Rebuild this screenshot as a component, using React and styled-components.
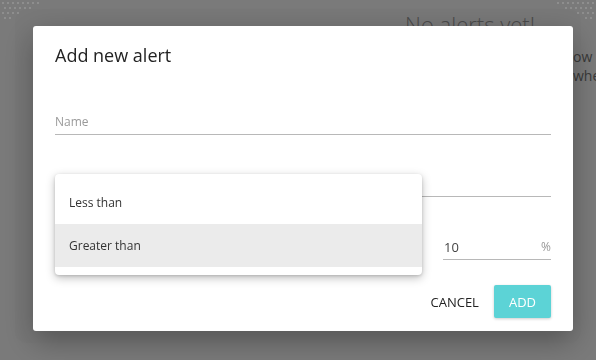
import React from "react";
import styled, { createGlobalStyle } from "styled-components";

const GlobalStyle = createGlobalStyle`
  html, body {
    margin: 0;
    padding: 0;
    width: 100%;
    height: 100%;
    overflow: hidden;
  }
  body {
    font-family: "Open Sans", "Liberation Sans", sans-serif;
    background: #f4f4f4;
    color: #333;
  }
`;

// Page behind the dialog
const Page = styled.div`
  width: 596px;
  height: 360px;
  box-sizing: border-box;
  padding: 13px 15px;
`;

const Card = styled.div`
  height: 100%;
  border-radius: 12px;
  background: #f1f1f1;
  box-sizing: border-box;
  padding-left: 330px;
`;

const EmptyState = styled.div`
  width: 250px;
  margin-top: -4px;
  white-space: nowrap;
`;

const EmptyTitle = styled.h2`
  margin: 0;
  font-size: 22px;
  font-weight: 300;
  line-height: 30px;
  text-align: center;
  color: #959595;
`;

const EmptyLine = styled.div`
  display: grid;
  grid-template-columns: 228px auto;
  font-size: 14px;
  line-height: 19px;
  color: #747474;
  margin-top: ${(p) => p.$gap || 0}px;
  & > span:first-child {
    text-align: right;
  }
`;

const Dots = styled.svg`
  position: absolute;
  top: 0;
  ${(p) => (p.$right ? "right: 0;" : "left: 0;")}
  opacity: 0.35;
`;

// Modal
const Backdrop = styled.div`
  position: fixed;
  inset: 0;
  background: rgba(0, 0, 0, 0.5);
`;

const Dialog = styled.div`
  position: fixed;
  left: 33px;
  top: 26px;
  width: 540px;
  box-sizing: border-box;
  padding: 15px 22px 13px;
  background: #fff;
  border-radius: 3px;
  box-shadow: 0 10px 30px rgba(0, 0, 0, 0.3);
`;

const Title = styled.h1`
  margin: 0;
  font-size: 18px;
  font-weight: 400;
  line-height: 28px;
  color: #222;
`;

const Form = styled.div`
  position: relative;
  margin-top: 40px;
`;

const Field = styled.div`
  height: 26px;
  box-sizing: border-box;
  border-bottom: 1px solid #b8b8b8;
  display: flex;
  align-items: center;
  justify-content: space-between;
  margin-top: ${(p) => p.$gap || 0}px;
`;

const Placeholder = styled.span`
  font-size: 12px;
  color: #9a9a9a;
  line-height: 20px;
`;

const Value = styled.span`
  font-size: 13px;
  color: #444;
  line-height: 20px;
  padding-left: 1px;
`;

const Unit = styled.span`
  font-size: 12px;
  color: #999;
`;

const Row = styled.div`
  display: grid;
  grid-template-columns: 1fr 108px;
  column-gap: 22px;
  margin-top: 37px;
`;

const Menu = styled.ul`
  position: absolute;
  left: 0;
  top: 65px;
  width: 367px;
  margin: 0;
  padding: 7px 0 8px;
  list-style: none;
  background: #fff;
  border-radius: 4px;
  box-shadow: 0 3px 10px rgba(0, 0, 0, 0.25), 0 1px 3px rgba(0, 0, 0, 0.15);
`;

const MenuItem = styled.li`
  height: 43px;
  display: flex;
  align-items: center;
  padding-left: 14px;
  font-size: 12px;
  color: #333;
  background: ${(p) => (p.$active ? "#ebebeb" : "transparent")};
`;

const Actions = styled.div`
  display: flex;
  justify-content: flex-end;
  align-items: center;
  gap: 7px;
  margin-top: 25px;
`;

const Button = styled.button`
  height: 33px;
  border: 0;
  border-radius: 2px;
  font-family: inherit;
  font-size: 13px;
  text-transform: uppercase;
  padding: 0 ${(p) => (p.$primary ? 15 : 8)}px;
  color: ${(p) => (p.$primary ? "#fff" : "#222")};
  background: ${(p) => (p.$primary ? "#5cd3d6" : "transparent")};
  box-shadow: ${(p) => (p.$primary ? "0 1px 3px rgba(0,0,0,0.2)" : "none")};
`;

const DotPattern = ({ right }) => {
  const dots = [];
  for (let r = 0; r < 4; r++) {
    for (let c = 0; c < 8 - r * 2; c++) {
      dots.push(<circle key={`${r}-${c}`} cx={3 + c * 5 + (r % 2) * 2} cy={3 + r * 5} r="0.8" fill="#fff" />);
    }
  }
  return (
    <Dots $right={right} width="44" height="22" viewBox="0 0 44 22" style={right ? { transform: "scaleX(-1)" } : undefined}>
      {dots}
    </Dots>
  );
};

export default function App() {
  return (
    <>
      <GlobalStyle />
      <Page>
        <Card>
          <EmptyState>
            <EmptyTitle>No alerts yet!</EmptyTitle>
            <EmptyLine $gap={8}>
              <span>Create an alert for any coin you foll</span>
              <span>ow</span>
            </EmptyLine>
            <EmptyLine>
              <span>and we will let you know </span>
              <span>when it moves.</span>
            </EmptyLine>
          </EmptyState>
        </Card>
      </Page>
      <Backdrop>
        <DotPattern />
        <DotPattern right />
      </Backdrop>
      <Dialog>
        <Title>Add new alert</Title>
        <Form>
          <Field>
            <Placeholder>Name</Placeholder>
          </Field>
          <Field $gap={36} />
          <Row>
            <Field />
            <Field>
              <Value>10</Value>
              <Unit>%</Unit>
            </Field>
          </Row>
          <Menu>
            <MenuItem>Less than</MenuItem>
            <MenuItem $active>Greater than</MenuItem>
          </Menu>
        </Form>
        <Actions>
          <Button>Cancel</Button>
          <Button $primary>Add</Button>
        </Actions>
      </Dialog>
    </>
  );
}
